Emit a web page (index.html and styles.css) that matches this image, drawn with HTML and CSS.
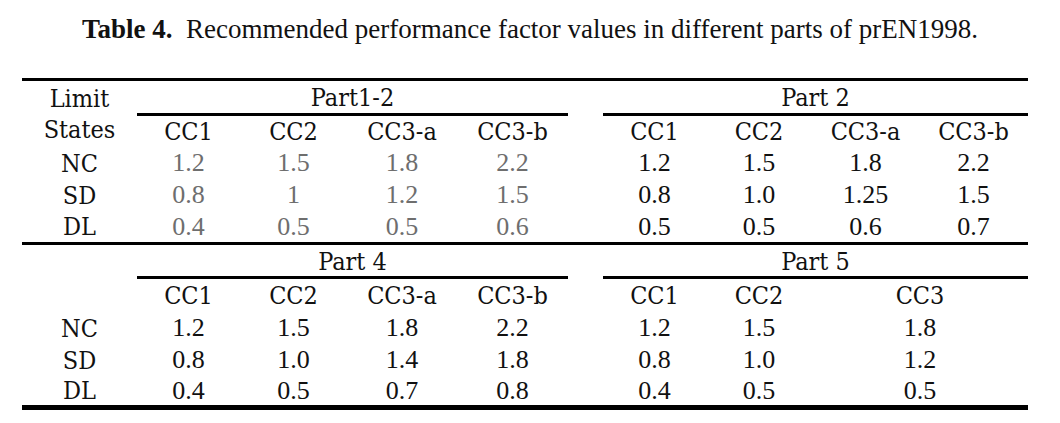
FILE: index.html
```html
<!DOCTYPE html>
<html>
<head>
<meta charset="utf-8">
<link rel="stylesheet" href="styles.css">
</head>
<body>
<div class="page">
  <p class="caption"><b>Table 4.</b>&nbsp; Recommended performance factor values in different parts of prEN1998.</p>
  <div class="tbl">
    <div class="lbl states"><span>Limit</span><span>States</span></div>
    <div class="grp g4 first">Part1-2</div>
    <div class="gap"></div>
    <div class="grp g4">Part 2</div>

    <div class="hd">CC1</div><div class="hd">CC2</div><div class="hd">CC3-a</div><div class="hd">CC3-b</div>
    <div class="gap"></div>
    <div class="hd">CC1</div><div class="hd">CC2</div><div class="hd">CC3-a</div><div class="hd">CC3-b</div>

    <div class="lbl">NC</div>
    <div class="v grey">1.2</div><div class="v grey">1.5</div><div class="v grey">1.8</div><div class="v grey">2.2</div>
    <div class="gap"></div>
    <div class="v">1.2</div><div class="v">1.5</div><div class="v">1.8</div><div class="v">2.2</div>

    <div class="lbl">SD</div>
    <div class="v grey">0.8</div><div class="v grey">1</div><div class="v grey">1.2</div><div class="v grey">1.5</div>
    <div class="gap"></div>
    <div class="v">0.8</div><div class="v">1.0</div><div class="v">1.25</div><div class="v">1.5</div>

    <div class="lbl">DL</div>
    <div class="v grey">0.4</div><div class="v grey">0.5</div><div class="v grey">0.5</div><div class="v grey">0.6</div>
    <div class="gap"></div>
    <div class="v">0.5</div><div class="v">0.5</div><div class="v">0.6</div><div class="v">0.7</div>

    <div class="rule"></div>

    <div class="lbl"></div>
    <div class="grp g4 lower">Part 4</div>
    <div class="gap"></div>
    <div class="grp g4 lower">Part 5</div>

    <div class="lbl"></div>
    <div class="hd">CC1</div><div class="hd">CC2</div><div class="hd">CC3-a</div><div class="hd">CC3-b</div>
    <div class="gap"></div>
    <div class="hd">CC1</div><div class="hd">CC2</div><div class="hd s2">CC3</div>

    <div class="lbl">NC</div>
    <div class="v">1.2</div><div class="v">1.5</div><div class="v">1.8</div><div class="v">2.2</div>
    <div class="gap"></div>
    <div class="v">1.2</div><div class="v">1.5</div><div class="v s2">1.8</div>

    <div class="lbl">SD</div>
    <div class="v">0.8</div><div class="v">1.0</div><div class="v">1.4</div><div class="v">1.8</div>
    <div class="gap"></div>
    <div class="v">0.8</div><div class="v">1.0</div><div class="v s2">1.2</div>

    <div class="lbl">DL</div>
    <div class="v">0.4</div><div class="v">0.5</div><div class="v">0.7</div><div class="v">0.8</div>
    <div class="gap"></div>
    <div class="v">0.4</div><div class="v">0.5</div><div class="v s2">0.5</div>
  </div>
</div>
</body>
</html>
```
FILE: styles.css
```css
html, body {
  margin: 0;
  padding: 0;
  background: #fff;
}
.page {
  width: 1060px;
  height: 423px;
  overflow: hidden;
  color: #000;
}
.caption {
  margin: 15px 0 0 0;
  height: 28px;
  line-height: 28px;
  text-align: center;
  font-family: "Liberation Serif", serif;
  font-size: 27px;
  white-space: nowrap;
  color: #111;
}
.caption b {
  font-weight: bold;
}
.tbl {
  margin: 35px 0 0 22px;
  width: 1006px;
  display: grid;
  grid-template-columns: 115px 103px 107px 110px 111px 35px 103px 106px 107px 109px;
  grid-template-rows: 35px 31px 32px 32px 31px 3px 34px 33px 32px 32px 29px;
  border-top: 3px solid #000;
  border-bottom: 5px solid #000;
}
.tbl > div {
  display: flex;
  align-items: center;
  justify-content: center;
  white-space: nowrap;
}
.lbl, .hd, .grp {
  font-family: "DejaVu Serif Condensed", "DejaVu Serif", serif;
  font-stretch: condensed;
  font-size: 25px;
  color: #111;
}
.states {
  grid-row: span 2;
  flex-direction: column;
  line-height: 31px;
}
.grp {
  border-bottom: 3px solid #000;
  box-sizing: border-box;
  padding-top: 1px;
}
.g4 {
  grid-column: span 4;
}
.s2 {
  grid-column: span 2;
}
.v {
  font-family: "Liberation Serif", serif;
  font-size: 26px;
  color: #111;
}
.grey {
  color: #6e6e6e;
}
.rule {
  grid-column: 1 / -1;
  background: #000;
}
```
